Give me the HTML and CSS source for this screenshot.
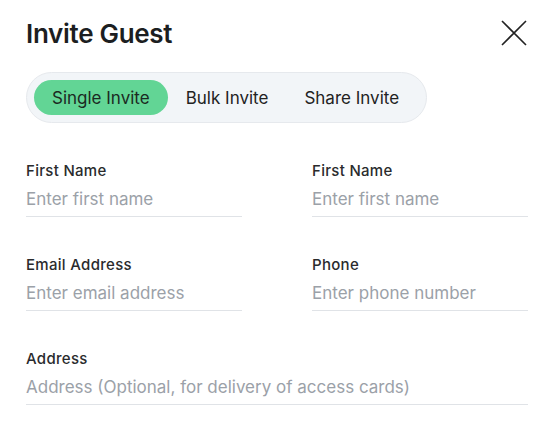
FILE: index.html
```html
<!DOCTYPE html>
<html>
<head>
<meta charset="utf-8">
<link rel="stylesheet" href="styles.css">
</head>
<body>
<div class="modal">
  <div class="header">
    <h1 class="title">Invite Guest</h1>
    <button class="close" aria-label="Close">
      <svg width="26" height="26" viewBox="0 0 26 26"><path d="M1 1 L25 25 M25 1 L1 25" stroke="#222" stroke-width="1.6" fill="none"/></svg>
    </button>
  </div>
  <div class="tabs">
    <div class="tab active">Single Invite</div>
    <div class="tab">Bulk Invite</div>
    <div class="tab">Share Invite</div>
  </div>
  <div class="form">
    <div class="field">
      <label class="label">First Name</label>
      <div class="input">Enter first name</div>
    </div>
    <div class="field">
      <label class="label">First Name</label>
      <div class="input">Enter first name</div>
    </div>
    <div class="field">
      <label class="label">Email Address</label>
      <div class="input">Enter email address</div>
    </div>
    <div class="field">
      <label class="label">Phone</label>
      <div class="input">Enter phone number</div>
    </div>
    <div class="field wide">
      <label class="label">Address</label>
      <div class="input">Address (Optional, for delivery of access cards)</div>
    </div>
  </div>
</div>
</body>
</html>
```
FILE: styles.css
```css
* { box-sizing: border-box; }
html, body { margin: 0; padding: 0; background: #fff; }
body { font-family: Inter, "Noto Sans", sans-serif; color: #1d1f22; }
.modal { width: 556px; height: 430px; padding: 16px 28px 0 26px; }
.header { display: flex; justify-content: space-between; align-items: center; height: 34px; }
.title { margin: 0; font-size: 26px; font-weight: 600; letter-spacing: -0.3px; color: #1c1e21; }
.close { border: 0; background: none; padding: 0; margin-right: 1px; width: 26px; height: 26px; display: flex; }
.tabs { display: inline-flex; margin-top: 22px; padding: 7px 7px 7px 7px; background: #f2f5f8; border: 1px solid #e6e9ed; border-radius: 26px; }
.tab { height: 35px; padding: 0 18px; display: flex; align-items: center; font-size: 17px; color: #222; border-radius: 18px; }
.tab:last-child { padding-right: 20px; }
.tab.active { background: #62d595; color: #1b2a22; }
.form { display: grid; grid-template-columns: 216px 216px; column-gap: 70px; row-gap: 38px; margin-top: 38px; }
.field { display: flex; flex-direction: column; }
.field.wide { grid-column: 1 / 3; }
.label { font-size: 15px; font-weight: 500; line-height: 20px; color: #2a2b2d; letter-spacing: 0.3px; }
.input { margin-top: 6px; height: 30px; font-size: 17px; line-height: 24px; color: #9ba1a8; border-bottom: 1px solid #e0e3e7; }
```
